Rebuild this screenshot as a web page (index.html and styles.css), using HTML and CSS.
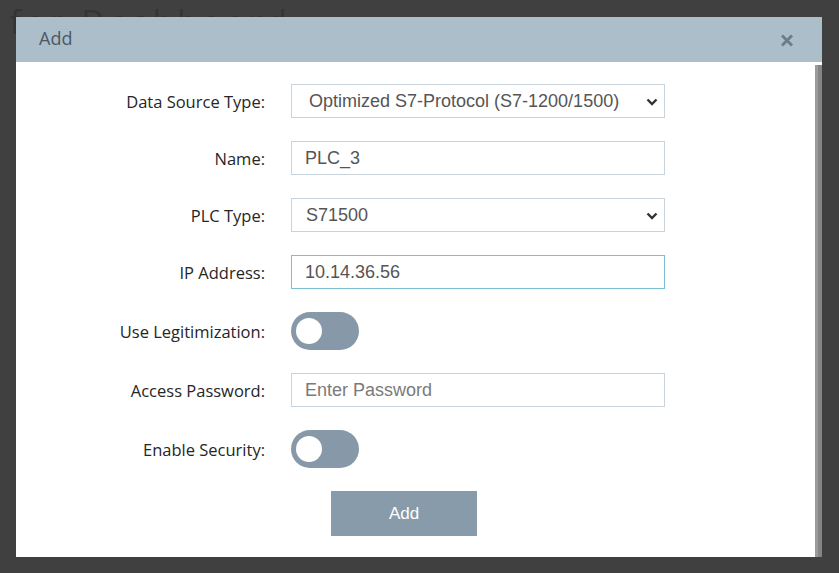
FILE: index.html
```html
<!DOCTYPE html>
<html lang="en">
<head>
<meta charset="utf-8">
<title>Add</title>
<link rel="stylesheet" href="styles.css">
</head>
<body>
<div class="page">
  <div class="page-title">for Dashboard</div>
</div>
<div class="overlay">
  <div class="dialog">
    <div class="dialog-header">
      <span class="dialog-title">Add</span>
      <span class="close" aria-label="Close">
        <svg width="14" height="13" viewBox="0 0 14 13"><path d="M2 1.5 L12 11.5 M12 1.5 L2 11.5" stroke="#6e7d88" stroke-width="3" stroke-linecap="butt"/></svg>
      </span>
    </div>
    <div class="dialog-main">
      <div class="dialog-body">
        <div class="form">
          <label class="label">Data Source Type:</label>
          <div class="field select">
            <span>Optimized S7-Protocol (S7-1200/1500)</span>
            <svg class="chev" width="12" height="8" viewBox="0 0 12 8"><path d="M1.5 1.5 L6 6 L10.5 1.5" fill="none" stroke="#333" stroke-width="2.4"/></svg>
          </div>

          <label class="label">Name:</label>
          <div class="field input"><span>PLC_3</span></div>

          <label class="label">PLC Type:</label>
          <div class="field select plc">
            <span>S71500</span>
            <svg class="chev" width="12" height="8" viewBox="0 0 12 8"><path d="M1.5 1.5 L6 6 L10.5 1.5" fill="none" stroke="#333" stroke-width="2.4"/></svg>
          </div>

          <label class="label">IP Address:</label>
          <div class="field input focus"><span>10.14.36.56</span></div>

          <label class="label">Use Legitimization:</label>
          <div class="toggle-cell"><div class="toggle"><div class="knob"></div></div></div>

          <label class="label">Access Password:</label>
          <div class="field input"><span class="placeholder">Enter Password</span></div>

          <label class="label">Enable Security:</label>
          <div class="toggle-cell"><div class="toggle"><div class="knob"></div></div></div>

          <div class="spacer"></div>
          <div class="actions"><button class="btn">Add</button></div>
        </div>
      </div>
      <div class="scrollbar"></div>
    </div>
  </div>
</div>
</body>
</html>
```

FILE: styles.css
```css
html, body {
  margin: 0;
  padding: 0;
  height: 100%;
}
body {
  background: #404040;
  overflow: hidden;
  position: relative;
}
.page {
  height: 100%;
}
.page-title {
  font-family: "Open Sans", sans-serif;
  font-size: 32px;
  color: #343434;
  padding-left: 10px;
  line-height: 40px;
  margin-top: 2px;
  letter-spacing: 5px;
}
.overlay {
  position: absolute;
  left: 16px;
  top: 17px;
}
.dialog {
  width: 806px;
  background: #fff;
  display: flex;
  flex-direction: column;
}
.dialog-header {
  height: 45px;
  background: #adbecb;
  display: flex;
  align-items: center;
  justify-content: space-between;
  padding: 0 28px 0 23px;
}
.dialog-title {
  font-family: "Open Sans", sans-serif;
  font-size: 18px;
  color: #4b5864;
  margin-top: -3px;
}
.close {
  display: flex;
  margin-top: 2px;
}
.dialog-main {
  display: flex;
}
.dialog-body {
  flex: 1;
  padding: 22px 0 21px;
}
.scrollbar {
  width: 7px;
  margin-top: 3px;
  background: linear-gradient(to right, #9b9b9b 0, #9b9b9b 3px, #858585 3px);
}
.form {
  display: grid;
  grid-template-columns: 249px 374px;
  column-gap: 26px;
  row-gap: 23px;
  align-items: center;
}
.label {
  font-family: "Open Sans", sans-serif;
  font-size: 16.5px;
  color: #262626;
  text-align: right;
}
.field {
  box-sizing: border-box;
  height: 34px;
  border: 1px solid #c9d3db;
  display: flex;
  align-items: center;
  font-family: "Liberation Sans", Arial, sans-serif;
  font-size: 18px;
  color: #555;
  padding-left: 13px;
}
.select {
  padding-left: 17px;
  justify-content: space-between;
  padding-right: 6px;
}
.select.plc {
  padding-left: 14px;
}
.chev {
  margin-top: 1px;
}
.input.focus {
  border-color: #7cbfd2;
}
.placeholder {
  color: #7a7a7a;
}
.toggle-cell {
  display: flex;
}
.toggle {
  width: 68px;
  height: 38px;
  border-radius: 19px;
  background: #8799a8;
  display: flex;
  align-items: center;
  padding-left: 5px;
  box-sizing: border-box;
}
.knob {
  width: 26px;
  height: 26px;
  border-radius: 50%;
  background: #fff;
}
.actions {
  display: flex;
}
.btn {
  margin-left: 40px;
  width: 146px;
  height: 45px;
  border: none;
  background: #879bab;
  color: #fff;
  font-family: "Liberation Sans", Arial, sans-serif;
  font-size: 17px;
  padding: 0;
}
```
